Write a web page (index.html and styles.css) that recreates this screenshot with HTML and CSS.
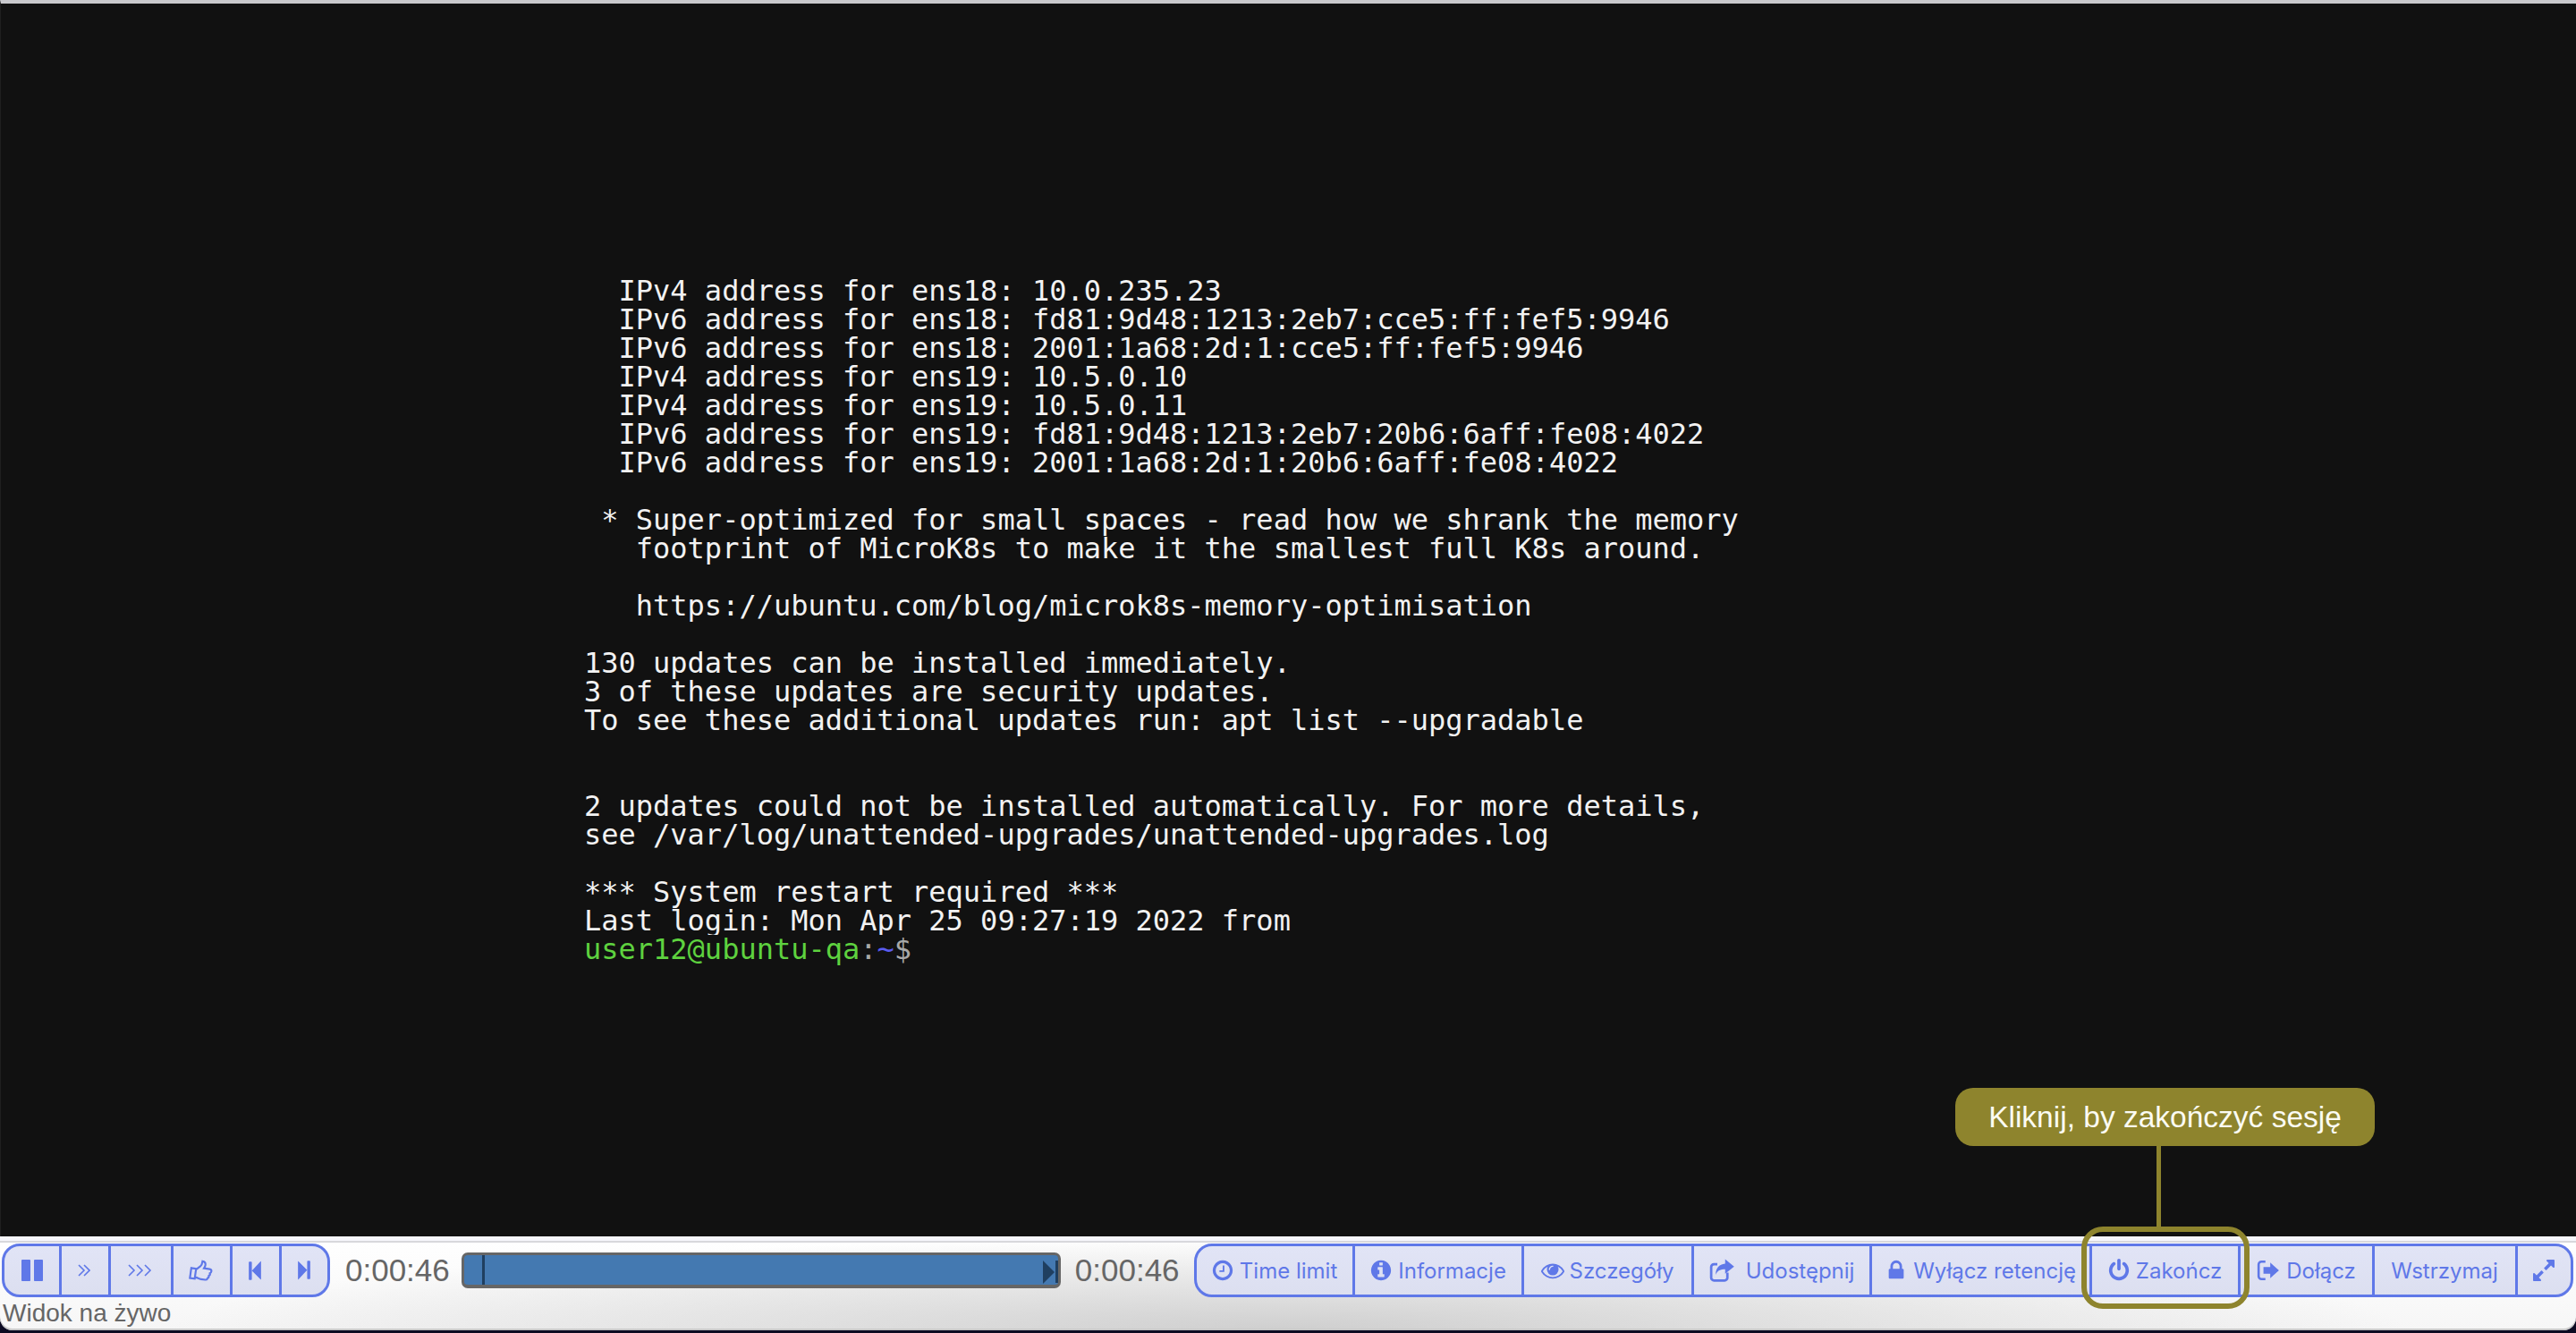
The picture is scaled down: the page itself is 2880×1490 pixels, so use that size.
FILE: index.html
```
<!DOCTYPE html>
<html lang="pl">
<head>
<meta charset="utf-8">
<title>Widok na żywo</title>
<link rel="stylesheet" href="styles.css">
</head>
<body>
<div class="window">
  <main class="terminal">
<pre class="screen">  IPv4 address for ens18: 10.0.235.23
  IPv6 address for ens18: fd81:9d48:1213:2eb7:cce5:ff:fef5:9946
  IPv6 address for ens18: 2001:1a68:2d:1:cce5:ff:fef5:9946
  IPv4 address for ens19: 10.5.0.10
  IPv4 address for ens19: 10.5.0.11
  IPv6 address for ens19: fd81:9d48:1213:2eb7:20b6:6aff:fe08:4022
  IPv6 address for ens19: 2001:1a68:2d:1:20b6:6aff:fe08:4022

 * Super-optimized for small spaces - read how we shrank the memory
   footprint of MicroK8s to make it the smallest full K8s around.

   https://ubuntu.com/blog/microk8s-memory-optimisation

130 updates can be installed immediately.
3 of these updates are security updates.
To see these additional updates run: apt list --upgradable


2 updates could not be installed automatically. For more details,
see /var/log/unattended-upgrades/unattended-upgrades.log

*** System restart required ***
Last login: Mon Apr 25 09:27:19 2022 from
<span class="prompt"><span class="p-user">user12@ubuntu-qa</span><span class="p-sep">:</span><span class="p-path">~</span><span class="p-sep">$</span></span></pre>
  </main>
  <footer class="panel">
    <div class="controls">
      <div class="group group-left">
        <button class="btn w-pause"><svg class="ico ico-pause" viewBox="0 0 1792 1792"><path d="M1664 192v1408q0 26-19 45t-45 19h-512q-26 0-45-19t-19-45v-1408q0-26 19-45t45-19h512q26 0 45 19t19 45zm-896 0v1408q0 26-19 45t-45 19h-512q-26 0-45-19t-19-45v-1408q0-26 19-45t45-19h512q26 0 45 19t19 45z"/></svg></button>
        <button class="btn w-ff"><svg class="chev chev2" viewBox="0 0 14 14"><path d="M1 1l6 6-6 6M7 1l6 6-6 6"/></svg></button>
        <button class="btn w-fff"><svg class="chev chev3" viewBox="0 0 27 14"><path d="M1 1l6 6-6 6M10 1l6 6-6 6M19 1l6 6-6 6"/></svg></button>
        <button class="btn w-like"><svg class="thumb" viewBox="0 0 24 24"><path d="M1.5 11h5v10.500h-5zM6.500 12l4-4c1.200-1.300 1.500-3 1.500-5.500 2.300 0 3.500 1.500 3.500 3.300 0 1.300-.5 2.700-1 3.700h6c1.300 0 2 1 2 2s-.7 1.800-1.300 2.200c.5 1 .2 2.300-.7 2.800.3 1.100-.1 2.200-1 2.700 0 1.200-1 1.800-2 1.800h-4.500c-2 0-3.500-.8-5.500-1"/></svg></button>
        <button class="btn w-step"><svg class="ico ico-step" viewBox="0 0 1792 1792"><path d="M1363 141q19-19 32-13t13 32v1472q0 26-13 32t-32-13l-710-710q-9-9-13-19v710q0 26-19 45t-45 19h-128q-26 0-45-19t-19-45v-1408q0-26 19-45t45-19h128q26 0 45 19t19 45v710q4-10 13-19z"/></svg></button>
        <button class="btn w-step-end"><svg class="ico ico-step" viewBox="0 0 1792 1792"><path d="M429 1651q-19 19-32 13t-13-32v-1472q0-26 13-32t32 13l710 710q9 9 13 19v-710q0-26 19-45t45-19h128q26 0 45 19t19 45v1408q0 26-19 45t-45 19h-128q-26 0-45-19t-19-45v-710q-4 10-13 19z"/></svg></button>
      </div>
      <span class="time time-start">0:00:46</span>
      <div class="track">
        <span class="cursor"></span>
        <span class="end-mark"></span>
      </div>
      <span class="time time-end">0:00:46</span>
      <div class="group group-right">
        <button class="btn w-limit"><svg class="ico" viewBox="0 0 1792 1792"><path d="M1024 544v448q0 14-9 23t-23 9h-320q-14 0-23-9t-9-23v-64q0-14 9-23t23-9h224v-352q0-14 9-23t23-9h64q14 0 23 9t9 23zm416 352q0-148-73-273t-198-198-273-73-273 73-198 198-73 273 73 273 198 198 273 73 273-73 198-198 73-273zm224 0q0 209-103 385.500t-279.500 279.500-385.500 103-385.500-103-279.500-279.500-103-385.500 103-385.500 279.500-279.500 385.500-103 385.500 103 279.500 279.500 103 385.500z"/></svg>Time limit</button>
        <button class="btn w-info"><svg class="ico" viewBox="0 0 1792 1792"><path d="M1152 1376v-160q0-14-9-23t-23-9h-96v-512q0-14-9-23t-23-9h-320q-14 0-23 9t-9 23v160q0 14 9 23t23 9h96v320h-96q-14 0-23 9t-9 23v160q0 14 9 23t23 9h448q14 0 23-9t9-23zm-128-896v-160q0-14-9-23t-23-9h-192q-14 0-23 9t-9 23v160q0 14 9 23t23 9h192q14 0 23-9t9-23zm640 416q0 209-103 385.500t-279.500 279.500-385.500 103-385.500-103-279.500-279.500-103-385.500 103-385.500 279.500-279.500 385.500-103 385.500 103 279.500 279.500 103 385.500z"/></svg>Informacje</button>
        <button class="btn w-eye"><svg class="ico" viewBox="0 0 1792 1792"><path d="M1664 960q-152-236-381-353 61 104 61 225 0 185-131.500 316.500t-316.500 131.500-316.500-131.500-131.500-316.500q0-121 61-225-229 117-381 353 133 205 333.500 326.500t434.500 121.500 434.500-121.500 333.500-326.500zm-720-384q0-20-14-34t-34-14q-125 0-214.500 89.500t-89.500 214.500q0 20 14 34t34 14 34-14 14-34q0-86 61-147t147-61q20 0 34-14t14-34zm848 384q0 34-20 69-140 230-376.500 368.500t-499.500 138.500-499.500-139-376.500-368q-20-35-20-69t20-69q140-229 376.500-368t499.500-139 499.500 139 376.500 368q20 35 20 69z"/></svg>Szczegóły</button>
        <button class="btn w-share"><svg class="share" viewBox="0 0 24 24"><path class="share-box" d="M17 14v4.500a2.500 2.500 0 0 1-2.500 2.500h-9.500a2.500 2.500 0 0 1-2.500-2.500v-9.500a2.500 2.500 0 0 1 2.500-2.500h3"/><path class="share-arrow" d="M15 2l8 6.500-8 6.500v-4c-4 0-7 1-8.500 5 0-6 3-9.500 8.500-10z"/></svg><span class="share-label">Udostępnij</span></button>
        <button class="btn w-lock"><svg class="ico" viewBox="0 0 1792 1792"><path d="M640 768h512v-192q0-106-75-181t-181-75-181 75-75 181v192zm832 96v576q0 40-28 68t-68 28h-960q-40 0-68-28t-28-68v-576q0-40 28-68t68-28h32v-192q0-184 132-316t316-132 316 132 132 316v192h32q40 0 68 28t28 68z"/></svg>Wyłącz retencję</button>
        <button class="btn w-end"><svg class="ico" viewBox="0 0 1792 1792"><path d="M1664 896q0 156-61 298t-164 245-245 164-298 61-298-61-245-164-164-245-61-298q0-182 80.500-343t226.500-270q43-32 95.500-25t83.500 50q32 42 24.500 94.500t-49.500 84.500q-98 74-151.500 181t-53.500 228q0 104 40.500 198.500t109.500 163.500 163.500 109.500 198.500 40.500 198.500-40.500 163.500-109.500 109.500-163.500 40.500-198.500q0-121-53.500-228t-151.500-181q-42-32-49.500-84.500t24.500-94.500q31-43 84-50t95 25q146 109 226.500 270t80.500 343zm-640-768v640q0 52-38 90t-90 38-90-38-38-90v-640q0-52 38-90t90-38 90 38 38 90z"/></svg>Zakończ</button>
        <button class="btn w-join"><svg class="join" viewBox="0 0 24 24"><path class="join-box" d="M9 3h-4a3 3 0 0 0-3 3v12a3 3 0 0 0 3 3h4"/><path d="M14 4l9 8-9 8v-4.500h-7v-7h7z"/></svg>Dołącz</button>
        <button class="btn w-hold">Wstrzymaj</button>
        <button class="btn w-full"><svg class="ico ico-full" viewBox="0 0 1792 1792"><path d="M883 1056q0 13-10 23l-332 332 144 144q19 19 19 45t-19 45-45 19h-448q-26 0-45-19t-19-45v-448q0-26 19-45t45-19 45 19l144 144 332-332q10-10 23-10t23 10l114 114q10 10 10 23zm781-864v448q0 26-19 45t-45 19-45-19l-144-144-332 332q-10 10-23 10t-23-10l-114-114q-10-10-10-23t10-23l332-332-144-144q-19-19-19-45t19-45 45-19h448q26 0 45 19t19 45z"/></svg></button>
      </div>
    </div>
    <div class="status">Widok na żywo</div>
  </footer>
  <div class="tip">Kliknij, by zakończyć sesję</div>
  <div class="tip-line"></div>
  <div class="tip-frame"></div>
</div>
</body>
</html>
```

FILE: styles.css
```
* { box-sizing: border-box; }
html, body { margin: 0; height: 100%; }
body { background: #0c0b22; overflow: hidden; }
.window {
  position: relative;
  width: 2880px;
  height: 1490px;
  display: flex;
  flex-direction: column;
}
.terminal {
  height: 1382px;
  background: #111;
  border-top: 4px solid #c9c9cd;
  border-left: 1px solid #1f1f1f;
  padding: 305px 0 0 652px;
}
.screen {
  margin: 0;
  font: 32px/32px "DejaVu Sans Mono", monospace;
  color: #f2f2f2;
}
.prompt { display: block; height: 32px; background: #111; position: relative; }
.p-user { color: #5ed23f; }
.p-sep { color: #a8a8a8; }
.p-path { color: #5a5cf0; }

.panel {
  height: 105px;
  background:
    radial-gradient(ellipse 1250px 105px at 50% 100%, rgba(200,200,200,.85), rgba(200,200,200,0) 100%),
    linear-gradient(#fff 0, #f6f6f6 100%);
  border-top: 5px solid #f6f6fb;
  border-bottom-left-radius: 14px;
  border-bottom-right-radius: 14px;
  box-shadow: inset 0 -2px 0 #c8c8c8;
}
.controls {
  display: flex;
  align-items: center;
  padding: 2px 3px 0 2px;
  height: 62px;
  border-top: 2px solid #d8d8dc;
}
.group {
  display: flex;
  height: 60px;
  border: 3px solid #5f78e8;
  border-radius: 20px;
  background: linear-gradient(#e1e4f6, #dcdff0);
  overflow: hidden;
  flex: none;
}
.btn {
  display: flex;
  align-items: center;
  justify-content: center;
  gap: 6px;
  padding: 0;
  border: 0;
  border-right: 3px solid #5f78e8;
  background: none;
  color: #5f78e8;
  font: 24px "Inter", sans-serif;
  white-space: nowrap;
}
.btn:last-child { border-right: 0; }
.w-pause { width: 64px; }
.w-ff { width: 55px; padding-right: 3px; }
.w-fff { width: 70px; padding-right: 2px; }
.w-like { width: 66px; padding-right: 2px; }
.w-step { width: 55px; padding-right: 2px; }
.w-step-end { flex: 1; padding-right: 2px; }
.group-left { width: 367px; }
.w-limit { width: 177px; }
.w-info { width: 189px; }
.w-eye { width: 190px; }
.w-share { width: 199px; }
.w-lock { width: 246px; }
.w-end { width: 166px; }
.w-join { width: 150px; }
.w-hold { width: 160px; }
.w-full { flex: 1; }
.group-right { width: 1542px; }
.ico { width: 26px; height: 26px; fill: #5f78e8; flex: none; }
.ico-pause { width: 28px; height: 28px; }
.ico-step { width: 24px; height: 24px; }
.ico-full { width: 28px; height: 28px; }
.chev { height: 14px; fill: none; stroke: #5f78e8; stroke-width: 1.6; }
.chev2 { width: 14px; }
.chev3 { width: 27px; }
.thumb { width: 26px; height: 28px; fill: none; stroke: #5f78e8; stroke-width: 2; transform: rotate(8deg); }
.share { width: 30px; height: 30px; flex: none; }
.share-box { fill: none; stroke: #5f78e8; stroke-width: 2.2; }
.share-arrow { fill: #5f78e8; }
.share-label { margin-left: 6px; }
.join { width: 28px; height: 26px; fill: #5f78e8; flex: none; }
.join-box { fill: none; stroke: #5f78e8; stroke-width: 2.4; }
.time {
  font: 35px "Liberation Sans", sans-serif;
  color: #666;
  flex: none;
}
.time-start { margin: 0 13px 0 17px; }
.time-end { margin: 0 16px; }
.track {
  position: relative;
  flex: none;
  width: 670px;
  height: 40px;
  background: #4479b1;
  border: 3px solid #666;
  border-bottom-width: 4px;
  border-radius: 7px;
}
.cursor {
  position: absolute;
  left: 20px;
  top: 0;
  bottom: 0;
  width: 3px;
  background: #1f3f60;
}
.end-mark {
  position: absolute;
  right: 0;
  top: 6px;
  bottom: 2px;
  width: 17px;
  background: linear-gradient(#1f3f60, #1f3f60) right / 3px 100% no-repeat;
}
.end-mark::before {
  content: "";
  position: absolute;
  left: 0;
  top: 0;
  border-left: 13px solid #1f3f60;
  border-top: 13px solid transparent;
  border-bottom: 13px solid transparent;
}
.status {
  padding: 3px 0 0 3px;
  font: 28px/32px "Liberation Sans", sans-serif;
  color: #666;
}
.tip {
  position: absolute;
  left: 2186px;
  top: 1216px;
  width: 469px;
  height: 65px;
  display: flex;
  align-items: center;
  justify-content: center;
  background: #8e842d;
  border-radius: 20px;
  color: #fbfbf2;
  font: 33.5px "Liberation Sans", sans-serif;
}
.tip-line {
  position: absolute;
  left: 2411px;
  top: 1281px;
  width: 5px;
  height: 90px;
  background: #8e842d;
}
.tip-frame {
  position: absolute;
  left: 2327px;
  top: 1371px;
  width: 188px;
  height: 92px;
  border: 6px solid #8e842d;
  border-radius: 24px;
}
```
